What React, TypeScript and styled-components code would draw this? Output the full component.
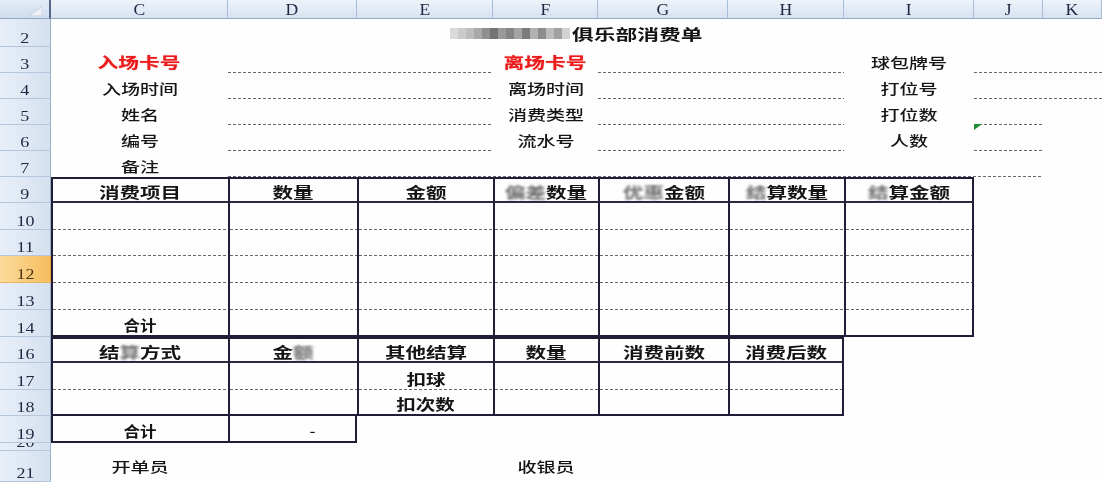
import React from 'react';
import styled, { createGlobalStyle } from 'styled-components';

const Global = createGlobalStyle`
  html, body { margin: 0; padding: 0; background: #fff; }
  body { font-family: "Noto Sans CJK SC", "Noto Sans", sans-serif; }
`;

const INK = '#231c36';
const DASH = 'repeating-linear-gradient(90deg, #666 0 3px, transparent 3px 5px)';

type Edge = 'thick' | 'solid' | 'dash' | undefined;

const edge = (e: Edge) =>
  e === 'thick' ? `2px solid ${INK}` : e === 'solid' ? `2px solid #2e2842` : 'none';

const Sheet = styled.div`
  display: grid;
  grid-template-columns: 51px 177px 129px 136px 105px 130px 116px 130px 69px 1fr;
  grid-template-rows: 19px 28px repeat(6, 26px) 27px 26px 27px 27px 27px 26px 27px 26px 27px 8px 31px;
  width: 1102px;
  height: 482px;
  overflow: hidden;
  background: #fefefe;
`;

const Corner = styled.div`
  grid-column: 1;
  grid-row: 1;
  box-sizing: border-box;
  background: linear-gradient(#e3ebf6, #cfdcee);
  border-right: 2px solid #55698a;
  border-bottom: 1px solid #92a9c7;
  display: flex;
  align-items: flex-end;
  justify-content: flex-end;
  padding: 0 7px 2px 0;
`;

const ColHead = styled.div<{ $col: number }>`
  grid-column: ${p => p.$col};
  grid-row: 1;
  display: flex;
  align-items: center;
  justify-content: center;
  box-sizing: border-box;
  background: linear-gradient(#eef3fa, #d7e2f0);
  border-right: 1px solid #a9bdd6;
  border-bottom: 1px solid #92a9c7;
  font-family: "Liberation Serif", serif;
  font-size: 16px;
  color: #1e2742;
  padding-top: 1px;
`;

const RowHead = styled.div<{ $row: number; $active?: boolean }>`
  grid-column: 1;
  grid-row: ${p => p.$row};
  display: flex;
  align-items: flex-end;
  justify-content: center;
  overflow: hidden;
  box-sizing: border-box;
  background: ${p =>
    p.$active
      ? 'linear-gradient(90deg, #fbdc9c, #f5bd5e)'
      : 'linear-gradient(90deg, #e7eef8, #d6e1ef)'};
  border-right: 1px solid ${p => (p.$active ? '#e0a040' : '#9bb2cf')};
  border-bottom: 1px solid ${p => (p.$active ? '#e6b463' : '#b4c6dc')};
  font-family: "Liberation Serif", serif;
  font-size: 15px;
  line-height: 15px;
  color: ${p => (p.$active ? '#4a3214' : '#1e2742')};
`;

const HeadText = styled.span<{ $sx?: number }>`
  display: inline-block;
  transform: scaleX(${p => p.$sx ?? 1.2});
`;

const Cell = styled.div<{
  $col: string;
  $row: number;
  $t?: Edge;
  $r?: Edge;
  $b?: Edge;
  $l?: Edge;
  $justify?: string;
  $pad?: string;
}>`
  grid-column: ${p => p.$col};
  grid-row: ${p => p.$row};
  position: relative;
  display: flex;
  align-items: center;
  justify-content: ${p => p.$justify ?? 'center'};
  box-sizing: border-box;
  padding: ${p => p.$pad ?? '3px 0 0 0'};
  border-top: ${p => edge(p.$t)};
  border-right: ${p => edge(p.$r)};
  border-bottom: ${p => edge(p.$b)};
  border-left: ${p => edge(p.$l)};
  background: ${p => (p.$b === 'dash' ? `${DASH} left bottom / 100% 1px no-repeat` : 'transparent')};
`;

const Label = styled.span<{ $bold?: boolean; $red?: boolean; $sx?: number; $size?: number; $origin?: string }>`
  display: inline-block;
  font-family: "Noto Sans CJK SC", "Noto Sans", sans-serif;
  font-size: ${p => p.$size ?? 14}px;
  line-height: 1;
  font-weight: ${p => (p.$bold ? 700 : 500)};
  color: ${p => (p.$red ? '#ec1a1a' : '#151515')};
  transform: scaleX(${p => p.$sx ?? 1.36});
  transform-origin: ${p => p.$origin ?? 'center'};
  white-space: nowrap;
  text-shadow: ${p => (p.$red ? '0 0 1px rgba(240,30,30,0.6)' : 'none')};
`;

const Blur = styled.span`
  filter: blur(1.3px);
  opacity: 0.75;
  color: #3a3a3a;
`;

const Mosaic = styled.span`
  display: inline-flex;
  height: 11px;
  margin-right: 2px;
  filter: blur(0.6px);
`;

const Tile = styled.span<{ $c: string }>`
  width: 8px;
  height: 100%;
  background: ${p => p.$c};
`;

const ErrorMark = styled.span`
  position: absolute;
  top: -1px;
  left: 0;
  width: 0;
  height: 0;
  border-top: 6px solid #1d8a36;
  border-right: 8px solid transparent;
`;

const COLS = ['C', 'D', 'E', 'F', 'G', 'H', 'I', 'J', 'K'];
const ROWS = ['2', '3', '4', '5', '6', '7', '9', '10', '11', '12', '13', '14', '16', '17', '18', '19', '20', '21'];
const TILES = ['#dadada', '#cbcbcb', '#bdbdbd', '#a9a9a9', '#8f8f8f', '#737373', '#999', '#858585', '#a4a4a4', '#7b7b7b', '#b2b2b2', '#8d8d8d', '#bcbcbc', '#a1a1a1', '#d2d2d2'];

type L = { col: number; row: number; text: string; red?: boolean; bold?: boolean };

const topLabels: L[] = [
  { col: 2, row: 3, text: '入场卡号', red: true, bold: true },
  { col: 2, row: 4, text: '入场时间' },
  { col: 2, row: 5, text: '姓名' },
  { col: 2, row: 6, text: '编号' },
  { col: 2, row: 7, text: '备注' },
  { col: 5, row: 3, text: '离场卡号', red: true, bold: true },
  { col: 5, row: 4, text: '离场时间' },
  { col: 5, row: 5, text: '消费类型' },
  { col: 5, row: 6, text: '流水号' },
  { col: 8, row: 3, text: '球包牌号' },
  { col: 8, row: 4, text: '打位号' },
  { col: 8, row: 5, text: '打位数' },
  { col: 8, row: 6, text: '人数' },
];

const dashCells: { col: string; row: number; mark?: boolean }[] = [
  ...[3, 4].flatMap(r => [
    { col: '3 / 5', row: r },
    { col: '6 / 8', row: r },
    { col: '9 / 11', row: r },
  ]),
  ...[5, 6].flatMap(r => [
    { col: '3 / 5', row: r },
    { col: '6 / 8', row: r },
    { col: '9 / 10', row: r, mark: r === 6 },
  ]),
  { col: '3 / 10', row: 7 },
];

const t1Head: React.ReactNode[] = [
  '消费项目',
  '数量',
  '金额',
  <><Blur>偏差</Blur>数量</>,
  <><Blur>优惠</Blur>金额</>,
  <><Blur>结</Blur>算数量</>,
  <><Blur>结</Blur>算金额</>,
];

const t2Head: React.ReactNode[] = [
  <>结<Blur>算</Blur>方式</>,
  <>金<Blur>额</Blur></>,
  '其他结算',
  '数量',
  '消费前数',
  '消费后数',
];

export default function App() {
  const t1Cells: React.ReactNode[] = [];
  for (let r = 8; r <= 13; r++) {
    for (let c = 2; c <= 8; c++) {
      let content: React.ReactNode = null;
      if (r === 8) content = <Label $bold $size={15} $sx={1.37}>{t1Head[c - 2]}</Label>;
      if (r === 13 && c === 2) content = <Label $bold $size={15} $sx={1.1}>合计</Label>;
      t1Cells.push(
        <Cell
          key={`t1-${r}-${c}`}
          $col={String(c)}
          $row={r}
          $t={r === 8 ? 'thick' : undefined}
          $l="thick"
          $r={c === 8 ? 'thick' : undefined}
          $b={r === 8 ? 'solid' : r === 13 ? 'thick' : 'dash'}
        >
          {content}
        </Cell>
      );
    }
  }

  const t2Cells: React.ReactNode[] = [];
  for (let r = 14; r <= 17; r++) {
    const last = r === 17 ? 3 : 7;
    for (let c = 2; c <= last; c++) {
      let content: React.ReactNode = null;
      let justify = 'center';
      let pad: string | undefined;
      if (r === 14) content = <Label $bold $size={15} $sx={1.37}>{t2Head[c - 2]}</Label>;
      if (r === 15 && c === 4) content = <Label $bold $size={15} $sx={1.3}>扣球</Label>;
      if (r === 16 && c === 4) content = <Label $bold $size={15} $sx={1.3}>扣次数</Label>;
      if (r === 17 && c === 2) content = <Label $bold $size={15} $sx={1.1}>合计</Label>;
      if (r === 17 && c === 3) {
        content = <Label $size={14} $sx={1.2}>-</Label>;
        justify = 'flex-end';
        pad = '3px 40px 0 0';
      }
      t2Cells.push(
        <Cell
          key={`t2-${r}-${c}`}
          $col={String(c)}
          $row={r}
          $justify={justify}
          $pad={pad}
          $t={r === 14 ? 'thick' : undefined}
          $l="thick"
          $r={c === last ? 'thick' : undefined}
          $b={r === 14 ? 'solid' : r === 15 ? 'dash' : 'thick'}
        >
          {content}
        </Cell>
      );
    }
  }

  return (
    <>
      <Global />
      <Sheet>
        <Corner>
          <svg width="13" height="10" viewBox="0 0 13 10">
            <polygon points="13,0 13,10 0,10" fill="#eef2f8" stroke="#b9c6d8" strokeWidth="0.8" />
          </svg>
        </Corner>
        {COLS.map((c, i) => (
          <ColHead key={c} $col={i + 2}>
            <HeadText $sx={1.1}>{c}</HeadText>
          </ColHead>
        ))}
        {ROWS.map((r, i) => (
          <RowHead key={r} $row={i + 2} $active={r === '12'}>
            <HeadText>{r}</HeadText>
          </RowHead>
        ))}

        <Cell $col="4 / 9" $row={2} $justify="flex-start" $pad="1px 0 0 93px">
          <Mosaic>
            {TILES.map((c, i) => (
              <Tile key={i} $c={c} />
            ))}
          </Mosaic>
          <Label $bold $size={15} $sx={1.45} $origin="left center">
            俱乐部消费单
          </Label>
        </Cell>

        {topLabels.map(l => (
          <Cell key={`${l.col}-${l.row}`} $col={String(l.col)} $row={l.row}>
            <Label $red={l.red} $bold={l.bold} $size={l.bold ? 15 : 14} $sx={l.bold ? 1.38 : 1.36}>
              {l.text}
            </Label>
          </Cell>
        ))}

        {dashCells.map(d => (
          <Cell key={`d-${d.col}-${d.row}`} $col={d.col} $row={d.row} $b="dash">
            {d.mark && <ErrorMark />}
          </Cell>
        ))}

        {t1Cells}
        {t2Cells}

        <Cell $col="2" $row={19} $pad="0 0 2px 0">
          <Label>开单员</Label>
        </Cell>
        <Cell $col="5" $row={19} $pad="0 0 2px 0">
          <Label>收银员</Label>
        </Cell>
      </Sheet>
    </>
  );
}
